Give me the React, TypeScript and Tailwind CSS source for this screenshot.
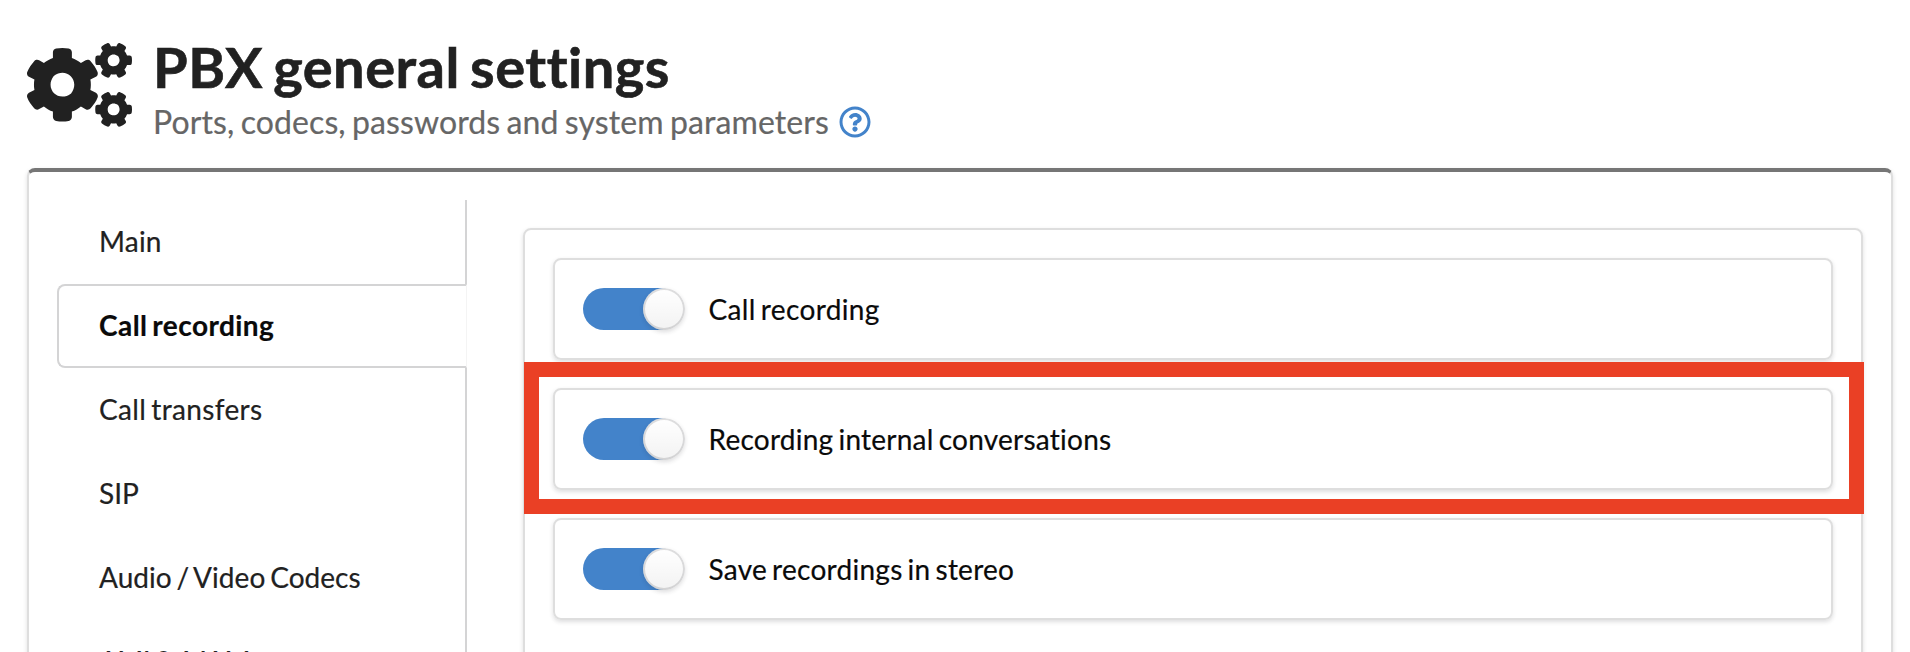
import { FaCogs, FaRegQuestionCircle } from "react-icons/fa";

const tabs = [
  { label: "Main", spacing: "tracking-[0.2px]" },
  { label: "Call recording", spacing: "tracking-[0.45px]" },
  { label: "Call transfers", spacing: "tracking-[0.35px]" },
  { label: "SIP", spacing: "tracking-normal" },
  { label: "Audio / Video Codecs", spacing: "tracking-[0.05px]" },
  { label: "AMI & AJAM", spacing: "tracking-[-0.6px]" },
];
const options = [
  { label: "Call recording", spacing: "tracking-[0.35px]" },
  { label: "Recording internal conversations", spacing: "tracking-[0.25px]" },
  { label: "Save recordings in stereo", spacing: "tracking-[0.27px]" },
];
const activeTab = "Call recording";

function Toggle() {
  return (
    <span className="relative block h-[42px] w-[98px] shrink-0 rounded-full bg-[#4383ca]">
      <span className="absolute top-0 left-[60px] size-[42px] rounded-full bg-white bg-linear-to-b from-transparent to-black/5 shadow-[0_2px_4px_0_rgba(34,36,38,0.15),0_0_0_2px_rgba(34,36,38,0.15)_inset]" />
    </span>
  );
}

export default function App() {
  return (
    <div className="h-[652px] w-[1910px] overflow-hidden bg-white pl-[27px] font-['Lato',sans-serif] text-[28px] text-[#0a0a0a] [-webkit-text-stroke:0.2px_currentColor] [word-spacing:-2.4px]">
      <header className="flex h-[168px] pt-[43px] text-[#212121]">
        <FaCogs className="h-[84px] w-[105px]" />
        <div className="ml-[21px]">
          <h1 className="-mt-[12px] h-[72px] text-[56px] leading-[72px] font-bold tracking-[0.5px] whitespace-nowrap [-webkit-text-stroke:0.6px_#212121] [word-spacing:-4px]">PBX general settings</h1>
          <div className="flex h-[38px] items-center text-[32px] leading-[38px] tracking-[0.1px] whitespace-nowrap text-[#666] [word-spacing:-2px]">
            Ports, codecs, passwords and system parameters
            <FaRegQuestionCircle className="ml-[10px] size-8 text-[#4383ca]" />
          </div>
        </div>
      </header>
      <main className="flex h-[520px] w-[1866px] rounded-lg border-2 border-t-4 border-[#dedede] border-t-[#767676] px-7 pt-7 shadow-[0_2px_4px_0_rgba(34,36,38,0.15)]">
        <nav className="flex w-[410px] shrink-0 flex-col">
          {tabs.map(({ label, spacing }) =>
            label === activeTab ? (
              <a key={label} className="flex h-[84px] shrink-0 items-center rounded-l-lg border-2 border-r border-[#d4d4d5] border-r-[#f4f4f4] pb-[2px] pl-[40px] font-bold">
                <span className={spacing}>{label}</span>
              </a>
            ) : (
              <a key={label} className="flex h-[84px] shrink-0 items-center border-r-2 border-[#d4d4d5] pb-[2px] pl-[42px] text-[#212121]">
                <span className={spacing}>{label}</span>
              </a>
            ),
          )}
        </nav>
        <section className="relative mt-7 ml-14 flex h-[500px] w-[1340px] shrink-0 flex-col gap-7 rounded-lg border-2 border-[#dedede] p-7 shadow-[0_2px_4px_0_rgba(34,36,38,0.15)]">
          {options.map(({ label, spacing }) => (
            <div key={label} className="flex h-[102px] shrink-0 items-center rounded-lg border-2 border-[#dedede] pl-7 shadow-[0_2px_4px_0_rgba(34,36,38,0.15)]">
              <Toggle />
              <span className={`ml-[27.5px] whitespace-nowrap ${spacing}`}>{label}</span>
            </div>
          ))}
          <div className="absolute top-[132px] -left-px h-[152px] w-[1340px] border-[15px] border-[#ea4025]" />
        </section>
      </main>
    </div>
  );
}
